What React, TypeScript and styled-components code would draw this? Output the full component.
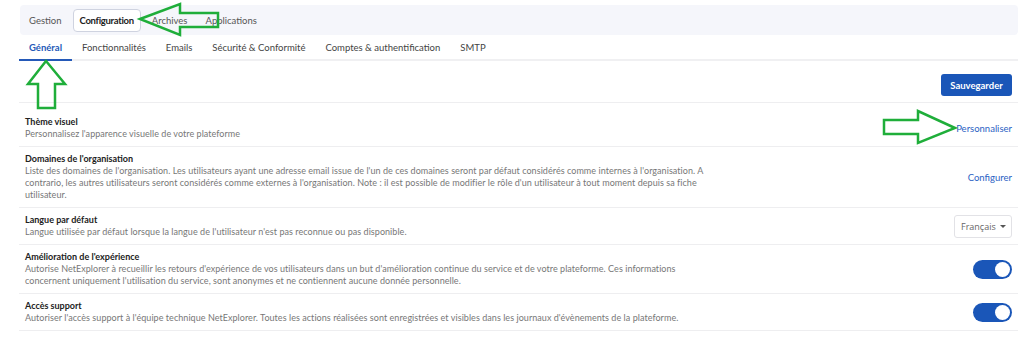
import React, { useState } from "react";
import styled, { createGlobalStyle } from "styled-components";

const GlobalStyle = createGlobalStyle`
  body {
    margin: 0;
    background: #fff;
    font-family: Lato, "Open Sans", sans-serif;
    color: #222;
  }
`;

const Page = styled.div`
  position: relative;
  width: 1034px;
  height: 339px;
  box-sizing: border-box;
  padding: 5px 16px 0 19px;
  overflow: hidden;
`;

const TopNav = styled.nav`
  display: flex;
  align-items: center;
  gap: 4px;
  height: 30px;
  margin-left: 1px;
  padding-left: 2px;
  background: #f5f6fb;
  border-radius: 4px;
`;

const NavItem = styled.div<{ active?: boolean }>`
  display: flex;
  align-items: center;
  height: 23px;
  padding: 0 6px;
  box-sizing: border-box;
  font-size: 9.5px;
  letter-spacing: ${(p) => (p.active ? "-0.3px" : "0")};
  color: ${(p) => (p.active ? "#222" : "#555")};
  font-weight: ${(p) => (p.active ? 700 : 400)};
  background: ${(p) => (p.active ? "#fff" : "transparent")};
  border: 1px solid ${(p) => (p.active ? "#cfd3e0" : "transparent")};
  border-radius: 4px;
`;

const Tabs = styled.div`
  display: flex;
  height: 24px;
  border-bottom: 2px solid #f0f0f2;
`;

const Tab = styled.div<{ active?: boolean }>`
  display: flex;
  align-items: center;
  padding: 0 10px;
  font-size: 9.5px;
  color: ${(p) => (p.active ? "#2459b8" : "#444")};
  font-weight: ${(p) => (p.active ? 700 : 400)};
  border-bottom: 2px solid ${(p) => (p.active ? "#2459b8" : "transparent")};
  margin-bottom: -2px;
`;

const Toolbar = styled.div`
  display: flex;
  justify-content: flex-end;
  padding: 13px 6px 6px;
  border-bottom: 1px solid #eeeef0;
`;

const SaveButton = styled.button`
  width: 71px;
  height: 22px;
  border: none;
  border-radius: 3px;
  background: #1a56b8;
  color: #fff;
  font-family: inherit;
  font-size: 9.5px;
  font-weight: 700;
  padding: 0;
`;

const Row = styled.div<{ tall?: boolean }>`
  display: flex;
  align-items: center;
  justify-content: space-between;
  padding: ${(p) => (p.tall ? "13px" : "6px")} 6px 6px;
  border-bottom: 1px solid #eeeef0;
`;

const Texts = styled.div`
  display: flex;
  flex-direction: column;
`;

const Title = styled.div`
  font-size: 9px;
  font-weight: 700;
  line-height: 12px;
  color: #222;
`;

const Desc = styled.div`
  font-size: 9px;
  line-height: 12px;
  letter-spacing: 0.05px;
  color: #777;
`;

const Link = styled.a`
  font-size: 9.5px;
  color: #2b62c4;
  cursor: pointer;
`;

const Select = styled.div`
  display: flex;
  align-items: center;
  gap: 4px;
  height: 23px;
  width: 58px;
  box-sizing: border-box;
  padding: 0 6px;
  border: 1px solid #e2e2e6;
  border-radius: 3px;
  font-family: "Open Sans", sans-serif;
  font-size: 9px;
  color: #666;
`;

const Caret = styled.span`
  width: 0;
  height: 0;
  border-left: 3px solid transparent;
  border-right: 3px solid transparent;
  border-top: 3px solid #555;
`;

const Toggle = styled.button<{ on: boolean }>`
  position: relative;
  width: 39px;
  height: 19px;
  border: none;
  padding: 0;
  border-radius: 10px;
  background: ${(p) => (p.on ? "#1a56b8" : "#ccc")};

  &::after {
    content: "";
    position: absolute;
    top: 2px;
    left: ${(p) => (p.on ? "22px" : "2px")};
    width: 15px;
    height: 15px;
    border-radius: 50%;
    background: #fff;
  }
`;

const Annotations = styled.svg`
  position: absolute;
  top: 0;
  left: 0;
  pointer-events: none;
`;

const Arrow = styled.polygon`
  fill: none;
  stroke: #1fae3a;
  stroke-width: 2.5;
  stroke-linejoin: miter;
`;

const App = (): JSX.Element => {
  const [improve, setImprove] = useState(true);
  const [support, setSupport] = useState(true);

  return (
    <Page>
      <GlobalStyle />
      <TopNav>
        <NavItem>Gestion</NavItem>
        <NavItem active>Configuration</NavItem>
        <NavItem>Archives</NavItem>
        <NavItem>Applications</NavItem>
      </TopNav>
      <Tabs>
        <Tab active>Général</Tab>
        <Tab>Fonctionnalités</Tab>
        <Tab>Emails</Tab>
        <Tab>Sécurité &amp; Conformité</Tab>
        <Tab>Comptes &amp; authentification</Tab>
        <Tab>SMTP</Tab>
      </Tabs>
      <Toolbar>
        <SaveButton>Sauvegarder</SaveButton>
      </Toolbar>

      <Row tall>
        <Texts>
          <Title>Thème visuel</Title>
          <Desc>Personnalisez l'apparence visuelle de votre plateforme</Desc>
        </Texts>
        <Link>Personnaliser</Link>
      </Row>

      <Row>
        <Texts>
          <Title>Domaines de l'organisation</Title>
          <Desc>
            Liste des domaines de l'organisation. Les utilisateurs ayant une
            adresse email issue de l'un de ces domaines seront par défaut
            considérés comme internes à l'organisation. A
            <br />
            contrario, les autres utilisateurs seront considérés comme externes
            à l'organisation. Note : il est possible de modifier le rôle d'un
            utilisateur à tout moment depuis sa fiche
            <br />
            utilisateur.
          </Desc>
        </Texts>
        <Link>Configurer</Link>
      </Row>

      <Row>
        <Texts>
          <Title>Langue par défaut</Title>
          <Desc>
            Langue utilisée par défaut lorsque la langue de l'utilisateur n'est
            pas reconnue ou pas disponible.
          </Desc>
        </Texts>
        <Select>
          Français <Caret />
        </Select>
      </Row>

      <Row>
        <Texts>
          <Title>Amélioration de l'expérience</Title>
          <Desc>
            Autorise NetExplorer à recueillir les retours d'expérience de vos
            utilisateurs dans un but d'amélioration continue du service et de
            votre plateforme. Ces informations
            <br />
            concernent uniquement l'utilisation du service, sont anonymes et ne
            contiennent aucune donnée personnelle.
          </Desc>
        </Texts>
        <Toggle on={improve} onClick={() => setImprove(!improve)} />
      </Row>

      <Row>
        <Texts>
          <Title>Accès support</Title>
          <Desc>
            Autoriser l'accès support à l'équipe technique NetExplorer. Toutes
            les actions réalisées sont enregistrées et visibles dans les
            journaux d'évènements de la plateforme.
          </Desc>
        </Texts>
        <Toggle on={support} onClick={() => setSupport(!support)} />
      </Row>

      <Annotations width="1034" height="339" viewBox="0 0 1034 339">
        <Arrow points="140,19 180,4 180,13 218,13 218,27 180,27 180,35" />
        <Arrow points="46,61 65,84 55,84 55,108 38,108 38,84 28,84" />
        <Arrow points="955,128 918,111 918,120 884,120 884,134 918,134 918,143" />
      </Annotations>
    </Page>
  );
};

export default App;
